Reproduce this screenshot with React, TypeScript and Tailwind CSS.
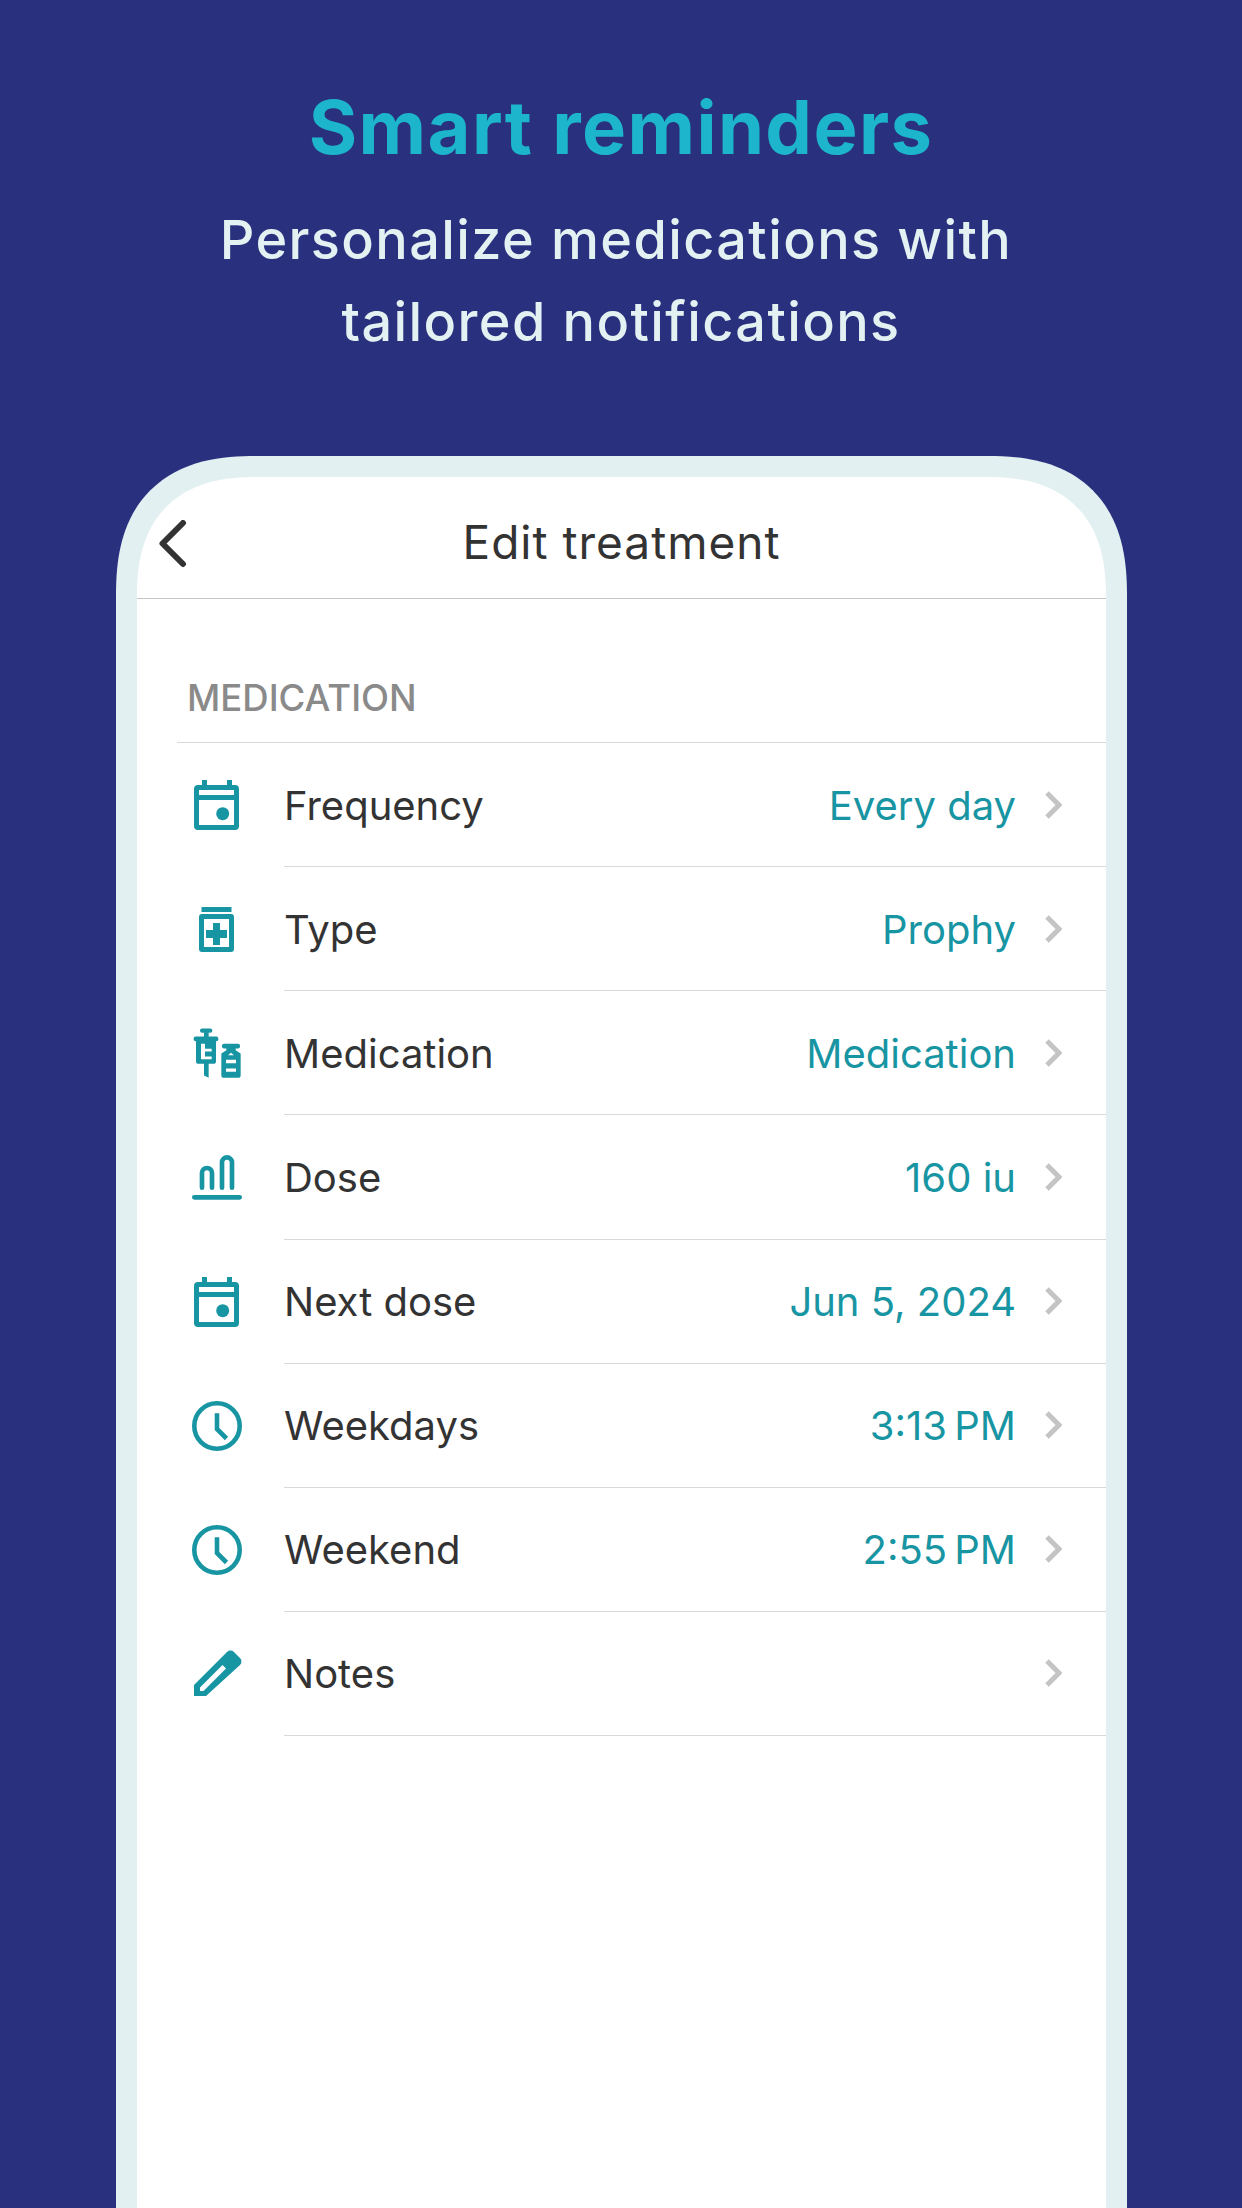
import React from 'react';

const TEAL = '#1895a3';

function CalendarIcon() {
  return (
    <svg width="45" height="50" viewBox="0 0 45 50" fill={TEAL}>
      <rect x="8" y="0" width="5" height="7" />
      <rect x="33" y="0" width="5" height="7" />
      <path fillRule="evenodd" d="M4 5h37a4 4 0 0 1 4 4v37a4 4 0 0 1-4 4H4a4 4 0 0 1-4-4V9a4 4 0 0 1 4-4zM5 10v5h35v-5zM5 20v25h35V20z" />
      <circle cx="28.700" cy="33.700" r="6.500" />
    </svg>
  );
}

function BottleIcon() {
  return (
    <svg width="35" height="45" viewBox="0 0 35 45" fill={TEAL}>
      <rect x="2.500" y="0" width="30" height="5" />
      <path fillRule="evenodd" d="M3 7h29a3 3 0 0 1 3 3v32a3 3 0 0 1-3 3H3a3 3 0 0 1-3-3V10a3 3 0 0 1 3-3zM5 12v28h25V12z" />
      <path d="M14 16h7v7h7v8h-7v7h-7v-7H7v-8h7z" />
    </svg>
  );
}

function SyringeIcon() {
  return (
    <svg width="50" height="52" viewBox="60 80 150 155" fill={TEAL}>
      <rect x="84" y="84" width="37" height="13" rx="6" />
      <rect x="96" y="95" width="14" height="15" />
      <rect x="65" y="108" width="74" height="14" rx="6" />
      <path fillRule="evenodd" d="M72 120h60v62a8 8 0 0 1-8 8h-14v42l-14-7v-35H80a8 8 0 0 1-8-8zM87 130v46h32v-8H99v-15h20v-8H99v-15z" />
      <rect x="150" y="130" width="54" height="14" rx="6" />
      <path fillRule="evenodd" d="M163 141h28v8l15 10v65a8 8 0 0 1-8 8h-42a8 8 0 0 1-8-8v-65l15-10zM177 157l-9 7h18zM162 178v10h30v-10zM162 204v10h30v-10z" />
    </svg>
  );
}

function DoseIcon() {
  return (
    <svg width="50" height="46" viewBox="65 460 150 138" fill="none" stroke={TEAL} strokeWidth="14" strokeLinecap="round">
      <path d="M72 590h136" />
      <path d="M95 561v-44a15 15 0 0 1 30 0v44" />
      <path d="M155 561v-76a15 15 0 0 1 30 0v76" />
    </svg>
  );
}

function ClockIcon() {
  return (
    <svg width="50" height="50" viewBox="0 0 50 50" fill="none" stroke={TEAL} strokeWidth="4.600">
      <circle cx="25" cy="25" r="22.700" />
      <path d="M25 12.300v15.700l9.500 9.500" />
    </svg>
  );
}

function PencilIcon() {
  return (
    <svg width="60" height="60" viewBox="0 0 60 60" fill={TEAL}>
      <path fillRule="evenodd" d="M7 52V41L40 8a5 5 0 0 1 7 0l6 6a5 5 0 0 1 0 7L19 52zM13 47h3.500L39 24.500 35.500 21 13 43.500z" />
    </svg>
  );
}

function RowChevron() {
  return (
    <svg width="18" height="28" viewBox="0 0 18 28" fill="none" stroke="#c4c4c4" strokeWidth="5">
      <path d="M3 2l12 12L3 26" />
    </svg>
  );
}

const rows = [
  { label: 'Frequency', value: 'Every day', icon: <CalendarIcon /> },
  { label: 'Type', value: 'Prophy', icon: <BottleIcon /> },
  { label: 'Medication', value: 'Medication', icon: <SyringeIcon /> },
  { label: 'Dose', value: '160 iu', icon: <DoseIcon /> },
  { label: 'Next dose', value: 'Jun 5, 2024', icon: <CalendarIcon /> },
  { label: 'Weekdays', value: '3:13\u202FPM', icon: <ClockIcon /> },
  { label: 'Weekend', value: '2:55\u202FPM', icon: <ClockIcon /> },
  { label: 'Notes', value: '', icon: <PencilIcon /> },
];

export default function App() {
  return (
    <div className="h-[2208px] overflow-hidden bg-[#29317f] flex flex-col font-['Inter',sans-serif]">
      {/* Heading */}
      <div className="h-[456px] shrink-0 pt-[86px] text-center">
        <h1 className="text-[74px] leading-[82px] font-bold tracking-[1.400px] text-[#1cb5cb]">Smart reminders</h1>
        <p className="mt-[31px] text-[54px] leading-[82px] font-medium tracking-[1.400px] text-[#e3f1f2]">
          <span className="mr-[10px]">Personalize medications with</span>
          <br />
          tailored notifications
        </p>
      </div>

      {/* Phone frame */}
      <div className="ml-[116px] mr-[115px] flex-1 bg-white border-[21px] border-b-0 border-[#e2f0f1] rounded-t-[140px] [corner-shape:superellipse(1.3)] flex flex-col">
        <header className="relative h-[122px] shrink-0 flex items-center justify-center pt-[10px] border-b border-[#c4c4c4]">
          <svg className="absolute left-[21px] top-[43px]" width="30" height="48" viewBox="0 0 30 48" fill="none" stroke="#333333" strokeWidth="6" strokeLinecap="round" strokeLinejoin="round">
            <path d="M25 3L4.500 23.500 25 44" />
          </svg>
          <span className="text-[46px] tracking-[1px] text-[#333333]">Edit treatment</span>
        </header>

        <div className="pt-[77px] ml-[40px]">
          <div className="pl-[10px] pb-[22px] text-[36.500px] leading-[44px] font-medium text-[#8a8a8a] border-b border-[#d9d9d9]">MEDICATION</div>
        </div>

        {rows.map(row => (
          <div key={row.label} className="flex h-[124.125px] shrink-0">
            <div className="w-[147px] pl-[40px] pr-[28px] flex items-center justify-center shrink-0">{row.icon}</div>
            <div className="flex-1 flex items-center justify-between border-b border-[#d9d9d9] pr-[44px]">
              <span className="pt-[2px] text-[40px] text-[#333333]">{row.label}</span>
              <div className="flex items-center gap-[28px]">
                <span className="pt-[2px] text-[40px] text-[#1895a3]">{row.value}</span>
                <RowChevron />
              </div>
            </div>
          </div>
        ))}
      </div>
    </div>
  );
}
